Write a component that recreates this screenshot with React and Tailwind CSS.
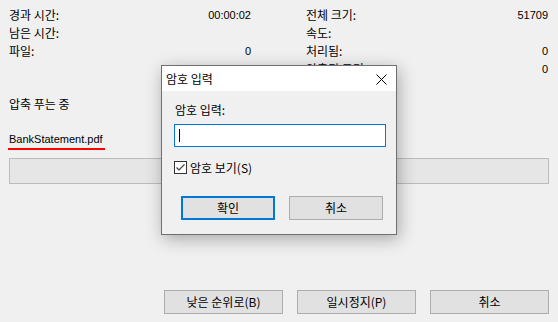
import React from "react";

const latin = "font-['Liberation_Sans',sans-serif] text-[11px]";

function Row({ label, value }) {
  return (
    <div className="flex justify-between h-[18px] leading-[18px]">
      <span>{label}</span>
      <span className={latin}>{value}</span>
    </div>
  );
}

export default function App() {
  return (
    <div className="relative w-[558px] h-[322px] bg-[#f0f0f0] text-[12px] text-black overflow-hidden flex flex-col font-['Noto_Sans_CJK_KR','Noto_Sans',sans-serif]">
      <div className="pl-[9px] pr-[10px] pt-[6px] grid grid-cols-2 gap-x-[55px]">
        <div className="flex flex-col">
          <Row label="경과 시간:" value="00:00:02" />
          <Row label="남은 시간:" value="" />
          <Row label="파일:" value="0" />
        </div>
        <div className="flex flex-col">
          <Row label="전체 크기:" value="51709" />
          <Row label="속도:" value="" />
          <Row label="처리됨:" value="0" />
          <Row label="압축된 크기:" value="0" />
        </div>
      </div>

      <div className="pl-[9px] mt-[17px] h-[18px] leading-[18px]">압축 푸는 중</div>
      <div className={"pl-[9px] mt-[17px] h-[18px] leading-[18px] " + latin}>BankStatement.pdf</div>
      <div className="ml-[8px] h-[2px] w-[97px] bg-[#ff0000]" />
      <div className="mx-[9px] mt-[8px] h-[26px] bg-[#e6e6e6] border border-[#bcbcbc]" />

      <div className="mt-auto mb-[8px] flex justify-end gap-[14px] pr-[9px]">
        <button className="w-[119px] h-[24px] bg-[#e1e1e1] border border-[#adadad] leading-[20px]">낮은 순위로(B)</button>
        <button className="w-[119px] h-[24px] bg-[#e1e1e1] border border-[#adadad] leading-[20px]">일시정지(P)</button>
        <button className="w-[119px] h-[24px] bg-[#e1e1e1] border border-[#adadad] leading-[20px]">취소</button>
      </div>

      {/* Modal dialog */}
      <div className="absolute left-[161px] top-[65px] w-[236px] h-[170px] border border-[#6f6f6f] bg-[#f0f0f0] shadow-[2px_4px_16px_rgba(0,0,0,0.3)] flex flex-col">
        <div className="h-[25px] bg-white flex items-center justify-between pl-[4px] pr-[9px]">
          <span className="text-[12px] leading-[16px]">암호 입력</span>
          <svg width="11" height="11" viewBox="0 0 11 11" className="mt-[1px]">
            <path d="M0.5 0.5 L10.5 10.5 M10.5 0.5 L0.5 10.5" stroke="#000" strokeWidth="1" fill="none" />
          </svg>
        </div>
        <div className="flex flex-col pl-[12px] pr-[10px]">
          <div className="mt-[11px] pl-[1px] h-[16px] leading-[16px]">암호 입력:</div>
          <div className="mt-[6px] h-[23px] border border-[#0078d7] bg-white flex items-center pl-[4px]">
            <div className="w-[1px] h-[13px] bg-black" />
          </div>
          <label className="mt-[14px] flex items-center gap-[3px] h-[13px]">
            <span className="w-[13px] h-[13px] border border-[#333] bg-white flex items-center justify-center">
              <svg width="11" height="11" viewBox="0 0 11 11">
                <path d="M1.5 5.5 L4 8 L9.5 2.5" stroke="#444" strokeWidth="1.2" fill="none" />
              </svg>
            </span>
            <span className="leading-[16px]">암호 보기(S)</span>
          </label>
          <div className="mt-[22px] pl-[7px] flex gap-[14px]">
            <button className="w-[94px] h-[24px] bg-[#e1e1e1] border-2 border-[#0078d7] leading-[18px]">확인</button>
            <button className="w-[94px] h-[24px] bg-[#e1e1e1] border border-[#adadad] leading-[20px]">취소</button>
          </div>
        </div>
      </div>
    </div>
  );
}
